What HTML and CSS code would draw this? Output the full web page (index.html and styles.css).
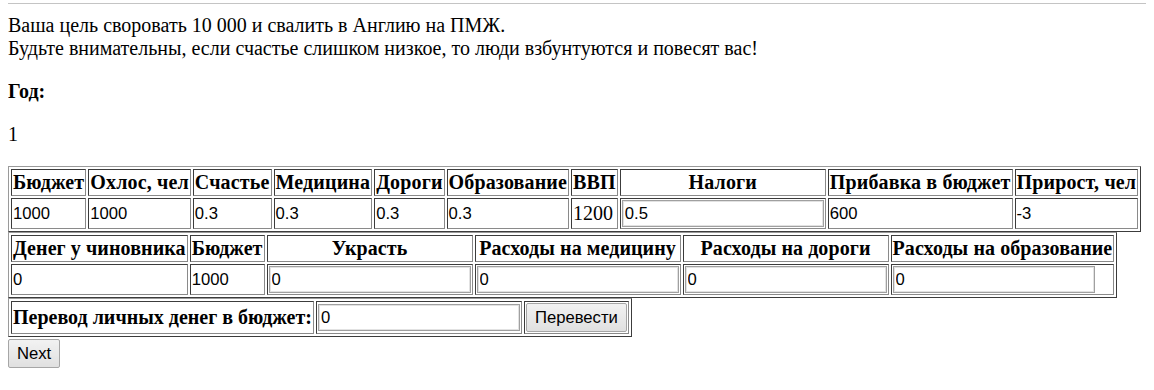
FILE: index.html
```html
<!DOCTYPE html>
<html lang="ru">
<head>
<meta charset="utf-8">
<title>Игра</title>
<link rel="stylesheet" href="styles.css">
</head>
<body>
<div class="topline"></div>
<div class="intro">Ваша цель своровать 10 000 и свалить в Англию на ПМЖ.<br>Будьте внимательны, если счастье слишком низкое, то люди взбунтуются и повесят вас!</div>
<p class="para"><b>Год:</b></p>
<p class="para">1</p>
<table class="grid">
  <tr>
    <th>Бюджет</th><th>Охлос, чел</th><th>Счастье</th><th>Медицина</th><th>Дороги</th><th>Образование</th><th>ВВП</th><th>Налоги</th><th>Прибавка в бюджет</th><th>Прирост, чел</th>
  </tr>
  <tr>
    <td class="num">1000</td><td class="num">1000</td><td class="num">0.3</td><td class="num">0.3</td><td class="num">0.3</td><td class="num">0.3</td><td>1200</td><td><input class="field" type="text" value="0.5"></td><td class="num">600</td><td class="num">-3</td>
  </tr>
</table>
<table class="grid grid-mid">
  <tr>
    <th>Денег у чиновника</th><th>Бюджет</th><th>Украсть</th><th>Расходы на медицину</th><th>Расходы на дороги</th><th>Расходы на образование</th>
  </tr>
  <tr>
    <td class="num">0</td><td class="num">1000</td><td><input class="field" type="text" value="0"></td><td><input class="field" type="text" value="0"></td><td><input class="field" type="text" value="0"></td><td><input class="field" type="text" value="0"></td>
  </tr>
</table>
<table class="grid grid-tight">
  <tr>
    <th>Перевод личных денег в бюджет:</th><td><input class="field" type="text" value="0"></td><td><button class="btn" type="button">Перевести</button></td>
  </tr>
</table>
<div class="actions"><button class="btn" type="button">Next</button></div>
</body>
</html>
```
FILE: styles.css
```css
html { background: #fff; }
body {
  margin: 0 8px 8px 8px;
  font-family: "Liberation Serif", "Times New Roman", serif;
  font-size: 20px;
  line-height: 23px;
  color: #000;
}
.topline {
  margin: 3px -6px 10px -8px;
  border-top: 1px solid #c4c4c4;
  height: 0;
}
.intro { margin: 0; }
.para { margin: 20px 0; }
.grid {
  border-collapse: separate;
  border-spacing: 2px;
  border: 1px solid;
  border-color: #9a9a9a #3c3c3c #3c3c3c #9a9a9a;
}
.grid th, .grid td {
  padding: 1px;
  border: 1px solid;
  border-color: #3c3c3c #8a8a8a #8a8a8a #3c3c3c;
  white-space: nowrap;
}
.grid th { font-weight: bold; text-align: center; letter-spacing: 0.15px; }
.grid-mid th { letter-spacing: 0.08px; }
.grid-tight th { letter-spacing: 0; }
.grid td { text-align: left; }
.grid td.num {
  font-family: "Liberation Sans", Arial, sans-serif;
  font-size: 16.67px;
}
.field {
  box-sizing: border-box;
  width: 202px;
  height: 27px;
  margin: 0;
  padding: 1px 2px;
  font-family: "Liberation Sans", Arial, sans-serif;
  font-size: 16.67px;
  color: #000;
  background: #fff;
  border: 1px solid #a0a0a0;
  box-shadow: inset 0 0 0 1px #e2e2e2;
  outline: none;
  display: block;
}
.btn {
  box-sizing: border-box;
  height: 29px;
  margin: 0;
  padding: 1px 8px;
  font-family: "Liberation Sans", Arial, sans-serif;
  font-size: 16.67px;
  color: #000;
  background: linear-gradient(#f2f2f2, #e0e0e0);
  border: 1px solid #a6a6a6;
  border-radius: 2px;
  display: block;
}
.actions { margin-top: 2px; }
```
